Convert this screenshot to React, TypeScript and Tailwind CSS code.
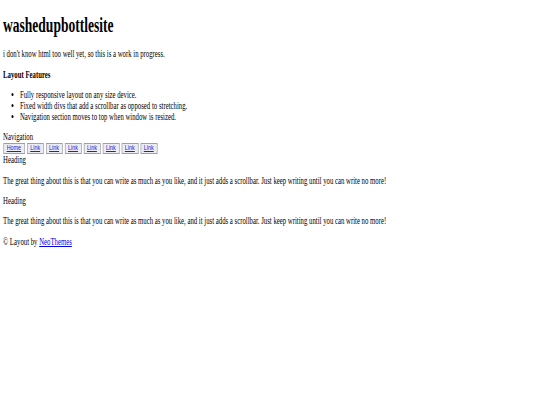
export default function App() {
  const links = ["Home", "Link", "Link", "Link", "Link", "Link", "Link", "Link"];
  const body =
    "The great thing about this is that you can write as much as you like, and it just adds a scrollbar. Just keep writing until you can write no more!";

  return (
    <div className="w-[540px] h-[405px] overflow-hidden bg-white text-black">
      <div
        className="origin-top-left scale-x-[0.676] w-[800px] pl-[4.5px] text-[10px] leading-[11px]"
        style={{ fontFamily: '"Liberation Serif", "Times New Roman", serif' }}
      >
        <h1 className="pt-[14px] text-[20px] leading-[22px] font-bold">washedupbottlesite</h1>
        <p className="mt-[12px]">i don't know html too well yet, so this is a work in progress.</p>
        <h4 className="mt-[10px] font-bold">Layout Features</h4>
        <ul className="mt-[9px] list-disc pl-[25px]">
          <li>Fully responsive layout on any size device.</li>
          <li>Fixed width divs that add a scrollbar as opposed to stretching.</li>
          <li>Navigation section moves to top when window is resized.</li>
        </ul>

        <div className="mt-[9px]">Navigation</div>
        <div className="flex gap-[3px] h-[12px] items-center">
          {links.map((l, i) => (
            <button
              key={i}
              className={`${i === 0 ? "w-[32px]" : "w-[25px]"} h-[11px] border border-[#a0a0a0] bg-[#ececf4] flex items-center justify-center`}
            >
              <span
                className="text-[8px] leading-[8px] text-[#2020d0] underline"
                style={{ fontFamily: '"Liberation Sans", Arial, sans-serif' }}
              >
                {l}
              </span>
            </button>
          ))}
        </div>

        <div>Heading</div>
        <p className="mt-[10px]">{body}</p>
        <div className="mt-[9px]">Heading</div>
        <p className="mt-[9px]">{body}</p>
        <p className="mt-[10px]">
          © Layout by <a className="text-[#0000ee] underline">NeoThemes</a>
        </p>
      </div>
    </div>
  );
}
